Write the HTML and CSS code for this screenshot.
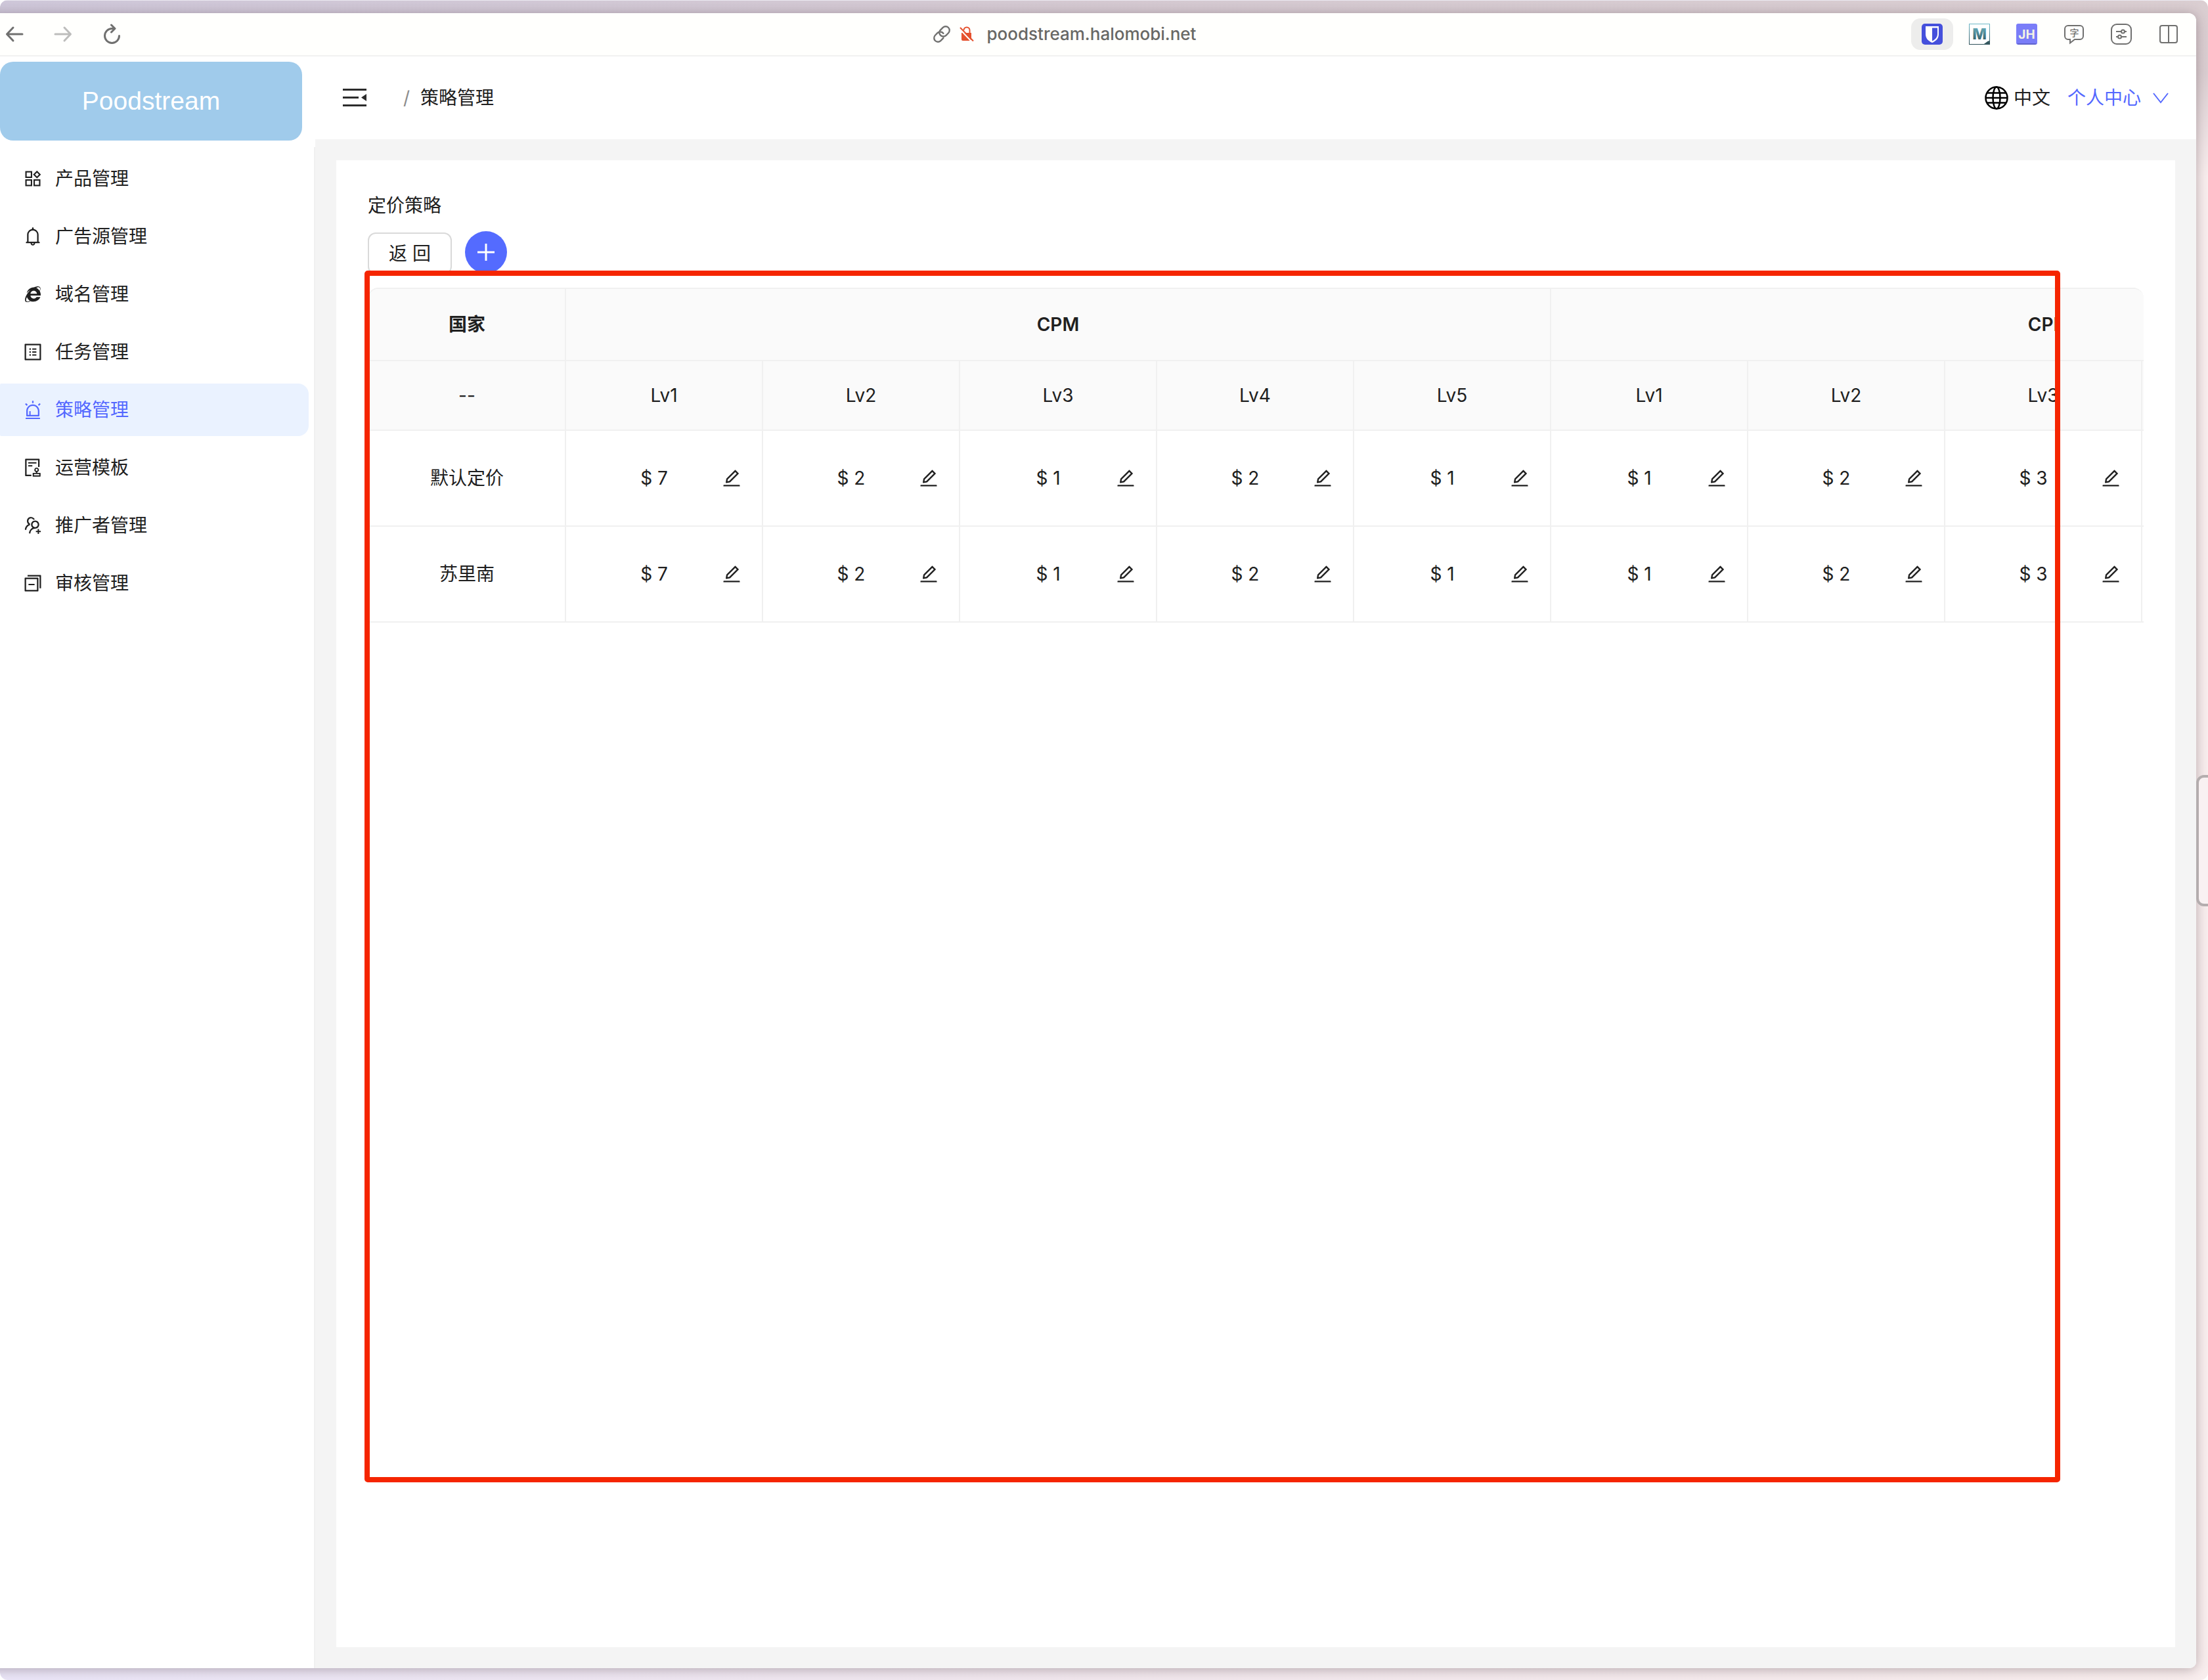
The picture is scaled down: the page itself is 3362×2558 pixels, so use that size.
FILE: index.html
```html
<!DOCTYPE html>
<html lang="zh-CN">
<head>
<meta charset="utf-8">
<meta name="viewport" content="width=device-width, initial-scale=1">
<title>策略管理</title>
<link rel="stylesheet" href="styles.css">
</head>
<body>
<div class="desktop">
  <span class="edge-handle"></span>
  <div class="window">
    <div class="toolbar">
      <div class="toolbar-nav">
        <button class="nav-btn" aria-label="Back"><svg viewBox="0 0 28 28"><path d="M26 14H3M12 4L2.500 14L12 24"/></svg></button>
        <button class="nav-btn nav-btn-off" aria-label="Forward"><svg viewBox="0 0 28 28"><path d="M2 14H25M16 4L25.500 14L16 24"/></svg></button>
        <button class="nav-btn" aria-label="Reload"><svg viewBox="0 0 28 32"><path d="M18 7.500H14.500A11 11 0 1 0 25.500 18.500M13.500 2L19 7.500L13.500 13"/></svg></button>
      </div>
      <div class="address">
        <svg class="link-icon" viewBox="1 1 22 22"><path d="M10 13a5 5 0 0 0 7.540.540l3-3a5 5 0 0 0-7.070-7.070l-3.500 3.500A5 5 0 0 0 10 13M14 11a5 5 0 0 0-7.540-.540l-3 3a5 5 0 0 0 7.070 7.070l3.500-3.500"/></svg>
        <svg class="lock-icon" viewBox="0 0 22 24"><path class="lock-body" d="M3 10H18V20A2 2 0 0 1 16 22H5A2 2 0 0 1 3 20Z"/><path class="lock-arc" d="M6.500 6A4.500 4.500 0 0 1 15.500 6V11"/><path class="lock-gap" d="M0 4L19 24"/><path class="lock-slash" d="M1 2L21 22.500"/></svg>
        <span>poodstream.halomobi.net</span>
      </div>
      <div class="toolbar-ext">
        <button class="ext-btn ext-btn-on" aria-label="Bitwarden"><svg viewBox="0 0 32 32"><rect width="32" height="32" rx="5" fill="#4550dc"/><path d="M6 4H26V16C26 23 21 27 16 29C11 27 6 23 6 16Z" fill="#fff"/><path d="M16 6.500H24V16C24 21 20 24.500 16 26.500Z" fill="#4550dc"/></svg></button>
        <button class="ext-btn" aria-label="M"><svg viewBox="0 0 32 32"><defs><linearGradient id="teal" x1="0" y1="0" x2="0" y2="1"><stop offset="0" stop-color="#6eb8c8"/><stop offset="1" stop-color="#2d5058"/></linearGradient></defs><rect x="0.500" y="0.500" width="31" height="31" fill="#fff" stroke="url(#teal)"/><path d="M20 32C25 31 27 26 32 26V32Z" fill="#35585f"/><text x="16" y="24" font-size="23" font-weight="800" text-anchor="middle" fill="url(#teal)">M</text></svg></button>
        <button class="ext-btn" aria-label="JH"><svg viewBox="0 0 32 32"><rect width="32" height="32" rx="3" fill="#7a7df8"/><path d="M1 30H31L29 32H3Z" fill="#6064cc"/><text x="16" y="23" font-size="19" font-weight="700" text-anchor="middle" fill="#f4f4e4">JH</text></svg></button>
        <button class="ext-btn" aria-label="Translate"><svg class="line-icon" viewBox="0 0 32 32"><path d="M7 3H25A5 5 0 0 1 30 8V19A5 5 0 0 1 25 24H17L10 29.500V24H7A5 5 0 0 1 2 19V8A5 5 0 0 1 7 3Z"/><text x="16.500" y="18.500" font-size="14" text-anchor="middle" class="glyph">字</text></svg></button>
        <button class="ext-btn" aria-label="Settings"><svg class="line-icon" viewBox="0 0 32 32"><rect x="1" y="1" width="30" height="30" rx="8"/><path d="M8 12H16M21 12H24M8 20H11M16 20H24"/><circle cx="18.500" cy="12" r="2.500"/><circle cx="13.500" cy="20" r="2.500"/></svg></button>
        <button class="ext-btn" aria-label="Split view"><svg class="line-icon" viewBox="0 0 32 32"><rect x="3" y="3" width="26" height="26" rx="3"/><path d="M16 3V29"/></svg></button>
      </div>
    </div>

    <div class="app">
      <aside class="sidebar">
        <button class="brand">Poodstream</button>
        <nav class="menu">
          <a class="menu-item" href="#"><svg viewBox="0 0 1024 1024"><g fill="none" stroke="currentColor" stroke-width="68"><rect x="178" y="178" width="268" height="268"/><rect x="178" y="578" width="268" height="268"/><rect x="578" y="578" width="268" height="268"/><path d="M713 167L857 311L713 455L569 311Z"/></g></svg>产品管理</a>
          <a class="menu-item" href="#"><svg viewBox="0 0 1024 1024"><path d="M816 768h-24V428c0-141.100-104.300-257.800-240-277.200V112c0-22.100-17.900-40-40-40s-40 17.900-40 40v38.800C336.300 170.200 232 286.900 232 428v340h-24c-17.700 0-32 14.300-32 32v32c0 4.400 3.600 8 8 8h216c0 61.800 50.200 112 112 112s112-50.200 112-112h216c4.400 0 8-3.600 8-8v-32c0-17.700-14.300-32-32-32zM512 888c-26.500 0-48-21.500-48-48h96c0 26.500-21.500 48-48 48zM304 768V428c0-55.600 21.600-107.800 60.900-147.100S456.400 220 512 220c55.600 0 107.800 21.600 147.100 60.900S720 372.400 720 428v340H304z"/></svg>广告源管理</a>
          <a class="menu-item" href="#"><svg viewBox="0 0 1024 1024"><path d="M852.600 367.600c16.300-36.900 32.100-90.700 32.100-131.800 0-109.100-119.500-147.600-314.500-57.900-161.400-10.800-316.800 110.500-355.600 279.700 46.300-52.300 117.400-123.400 183-151.700C316.100 378.300 246.700 470 194 565.600c-31.100 56.900-66 148.800-66 217.500 0 147.900 139.300 129.800 270.400 63 47.100 23.100 99.800 23.400 152.500 23.400 145.700 0 276.400-81.400 325.200-219H694.900c-78.800 132.900-295.200 79.500-295.200-71.200h493.200c9.600-65.400-2.500-143.600-40.300-211.700zM224.800 648.300c26.600 76.700 80.600 143.800 150.400 185-133.100 73.400-259.900 43.600-150.400-185zm174-163.300c3-82.700 75.400-142.300 156-142.300 80.100 0 153 59.600 156 142.300h-312zm276.800-281.400c32.100-15.400 72.800-33 108.800-33 47.100 0 81.400 32.600 81.400 80.600 0 30-11.100 73.500-21.900 101.800-39.300-63.500-98.900-122.400-168.300-149.400z"/></svg>域名管理</a>
          <a class="menu-item" href="#"><svg viewBox="0 0 1024 1024"><path d="M880 112H144c-17.700 0-32 14.300-32 32v736c0 17.700 14.300 32 32 32h736c17.700 0 32-14.300 32-32V144c0-17.700-14.300-32-32-32zm-40 728H184V184h656v656z"/><path d="M484 336h200v64H484zM484 480h200v64H484zM484 624h200v64H484z"/><circle cx="380" cy="368" r="40"/><circle cx="380" cy="512" r="40"/><circle cx="380" cy="656" r="40"/></svg>任务管理</a>
          <a class="menu-item menu-item-on" href="#" aria-current="page"><svg viewBox="0 0 1024 1024"><path d="M193 796c0 17.700 14.300 32 32 32h574c17.700 0 32-14.300 32-32V563c0-176.200-142.800-319-319-319S193 386.800 193 563v233zm72-233c0-136.400 110.600-247 247-247s247 110.600 247 247v193H404V585c0-5.500-4.500-10-10-10h-44c-5.500 0-10 4.500-10 10v171h-75V563zm-48.100-252.500l39.600-39.600c3.100-3.100 3.100-8.200 0-11.300l-67.900-67.900c-3.100-3.100-8.200-3.100-11.300 0l-39.600 39.600a8.030 8.030 0 0 0 0 11.300l67.900 67.900c3.100 3.100 8.100 3.100 11.300 0zm669.600-79.200l-39.600-39.600c-3.100-3.100-8.200-3.100-11.300 0l-67.900 67.900a8.030 8.030 0 0 0 0 11.300l39.600 39.600c3.100 3.100 8.200 3.100 11.300 0l67.900-67.900c3.100-3.200 3.100-8.200 0-11.300zM832 892H192c-17.700 0-32 14.300-32 32v24c0 4.400 3.600 8 8 8h688c4.400 0 8-3.600 8-8v-24c0-17.700-14.300-32-32-32zM484 180h56c4.400 0 8-3.600 8-8V76c0-4.400-3.600-8-8-8h-56c-4.400 0-8 3.600-8 8v96c0 4.400 3.600 8 8 8z"/></svg>策略管理</a>
          <a class="menu-item" href="#"><svg viewBox="0 0 1024 1024"><path d="M296 250c-4.400 0-8 3.600-8 8v48c0 4.400 3.600 8 8 8h384c4.400 0 8-3.600 8-8v-48c0-4.400-3.600-8-8-8H296zm184 144H296c-4.400 0-8 3.600-8 8v48c0 4.400 3.600 8 8 8h184c4.400 0 8-3.600 8-8v-48c0-4.400-3.600-8-8-8zm-48 458H208V148h560v320c0 4.400 3.600 8 8 8h56c4.400 0 8-3.600 8-8V108c0-17.700-14.300-32-32-32H168c-17.700 0-32 14.300-32 32v784c0 17.700 14.300 32 32 32h264c4.400 0 8-3.600 8-8v-56c0-4.400-3.600-8-8-8zm440-88H728v-36.600c46.300-13.800 80-56.600 80-107.400 0-61.900-50.100-112-112-112s-112 50.100-112 112c0 50.700 33.700 93.600 80 107.400V764H520c-8.800 0-16 7.200-16 16v152c0 8.800 7.200 16 16 16h352c8.800 0 16-7.200 16-16V780c0-8.800-7.200-16-16-16zM646 620c0-27.600 22.400-50 50-50s50 22.400 50 50-22.400 50-50 50-50-22.400-50-50zm180 266H566v-60h260v60z"/></svg>运营模板</a>
          <a class="menu-item" href="#"><svg viewBox="0 0 1024 1024"><path d="M892 772h-80v-80c0-4.400-3.600-8-8-8h-48c-4.400 0-8 3.600-8 8v80h-80c-4.400 0-8 3.600-8 8v48c0 4.400 3.600 8 8 8h80v80c0 4.400 3.600 8 8 8h48c4.400 0 8-3.600 8-8v-80h80c4.400 0 8-3.600 8-8v-48c0-4.400-3.600-8-8-8zM373.500 498.400c-.9-8.700-1.400-17.500-1.400-26.400 0-15.900 1.500-31.400 4.300-46.500.7-3.600-1.200-7.300-4.500-8.800-13.600-6.100-26.100-14.500-36.900-25.100a127.540 127.540 0 0 1-38.700-95.400c.9-32.100 13.800-62.600 36.300-85.600 24.700-25.300 57.900-39.100 93.200-38.700 31.900.3 62.700 12.600 86 34.400 7.900 7.400 14.700 15.600 20.400 24.400 2 3.100 5.900 4.400 9.300 3.200 17.600-6.100 36.200-10.400 55.300-12.400 5.600-.6 8.800-6.600 6.300-11.600-32.500-64.300-98.900-108.700-175.700-109.900-110.800-1.700-203.200 89.200-203.200 200 0 62.800 28.900 118.800 74.200 155.500-31.800 14.700-61.100 35-86.500 60.400-54.800 54.700-85.800 126.900-87.800 204a8 8 0 0 0 8 8.200h56.100c4.300 0 7.900-3.400 8-7.700 1.900-58 25.400-112.300 66.700-153.500 29.400-29.400 65.400-49.800 104.700-59.700 3.800-1.100 6.400-4.800 5.900-8.800zM824 472c0-109.400-87.900-198.300-196.900-200C516.300 270.300 424 361.200 424 472c0 62.800 29 118.800 74.200 155.500a300.950 300.950 0 0 0-86.400 60.400C357 742.600 326 814.800 324 891.800a8 8 0 0 0 8 8.200h56c4.300 0 7.900-3.400 8-7.700 1.900-58 25.400-112.300 66.700-153.500C505.800 695.700 563 672 624 672c110.400 0 200-89.500 200-200zm-109.500 90.500C690.300 586.700 658.200 600 624 600s-66.300-13.300-90.500-37.500a127.260 127.260 0 0 1-37.500-91.800c.3-32.800 13.400-64.500 36.300-88 24-24.600 56.100-38.300 90.400-38.700 33.900-.3 66.800 12.900 91 36.600 24.800 24.300 38.400 56.800 38.400 91.400-.1 34.200-13.400 66.300-37.600 90.500z"/></svg>推广者管理</a>
          <a class="menu-item" href="#"><svg viewBox="0 0 1024 1024"><path d="M752 240H144c-17.700 0-32 14.300-32 32v608c0 17.700 14.300 32 32 32h608c17.700 0 32-14.300 32-32V272c0-17.700-14.300-32-32-32zm-40 600H184V312h528v528zM880 112H264c-4.400 0-8 3.600-8 8v56c0 4.400 3.600 8 8 8h576v568c0 4.400 3.600 8 8 8h56c4.400 0 8-3.600 8-8V144c0-17.700-14.300-32-32-32zM300 544h296v64H300z"/></svg>审核管理</a>
        </nav>
      </aside>

      <div class="main">
        <header class="header">
          <button class="fold-btn" aria-label="Collapse menu"><svg viewBox="0 0 36 36"><path d="M0 4H36V7H0ZM0 16H24V19H0ZM0 28H36V31H0ZM36 12V23L28 17.500Z"/></svg></button>
          <div class="crumbs"><span class="crumb-sep">/</span><span>策略管理</span></div>
          <button class="lang-btn"><svg viewBox="0 0 36 36"><circle cx="18" cy="18" r="16.500"/><ellipse cx="18" cy="18" rx="5.500" ry="16.500"/><path d="M1.500 18H34.500M4 10.500H32M4 25.500H32"/></svg>中文</button>
          <a class="user-link" href="#">个人中心<svg viewBox="0 0 28 28"><path d="M3 7L14 21L25 7"/></svg></a>
        </header>

        <div class="content">
          <section class="card">
            <h1 class="card-title">定价策略</h1>
            <div class="actions">
              <button class="back-btn"><span>返</span><span>回</span></button>
              <button class="add-btn" aria-label="Add"><svg viewBox="0 0 32 32"><path d="M16 3V29M3 16H29"/></svg></button>
            </div>
            <div class="table-scroll">
              <table class="price-table">
                <thead>
                  <tr class="row-group"><th scope="col">国家</th><th scope="colgroup" colspan="5">CPM</th><th scope="colgroup" colspan="5">CPI</th></tr>
                  <tr class="row-level"><td>--</td><td>Lv1</td><td>Lv2</td><td>Lv3</td><td>Lv4</td><td>Lv5</td><td>Lv1</td><td>Lv2</td><td>Lv3</td><td></td><td></td></tr>
                </thead>
                <tbody>
                  <tr data-name="默认定价"></tr>
                  <tr data-name="苏里南"></tr>
                </tbody>
              </table>
            </div>
            <div class="highlight"></div>
          </section>
        </div>
      </div>
    </div>
  </div>
</div>
<script src="table.js"></script>
</body>
</html>
```
FILE: table.js
```javascript
// Fill each country row with its price per level and an edit button.
const prices = [7, 2, 1, 2, 1, 1, 2, 3];
const editIcon = '<svg viewBox="0 0 1024 1024"><path d="M257.700 752c2 0 4-.2 6-.5L431.900 722c2-.4 3.900-1.300 5.300-2.800l423.900-423.900a9.960 9.960 0 0 0 0-14.100L694.900 114.900c-1.900-1.900-4.400-2.900-7.100-2.900s-5.200 1-7.100 2.900L256.800 538.800c-1.500 1.500-2.400 3.300-2.800 5.300l-29.500 168.200a33.500 33.500 0 0 0 9.400 29.800c6.600 6.400 14.900 9.900 23.800 9.900zm67.400-174.400L687.800 215l73.300 73.300-362.700 362.600-88.900 15.700 15.600-89zM880 836H144c-17.700 0-32 14.300-32 32v36c0 4.400 3.600 8 8 8h784c4.400 0 8-3.600 8-8v-36c0-17.700-14.300-32-32-32z"/></svg>';
document.querySelectorAll('tr[data-name]').forEach(function (row) {
  const cells = prices.map(function (p) {
    return '<td><div class="price"><span>$ ' + p + '</span><button class="edit-btn" aria-label="Edit">' + editIcon + '</button></div></td>';
  });
  row.innerHTML = '<td>' + row.dataset.name + '</td>' + cells.join('') + '<td></td><td></td>';
});
```
FILE: styles.css
```css
* {
  box-sizing: border-box;
}

body {
  margin: 0;
  background: #fff;
  color: #202020;
  font: 28px/44px Inter, "Noto Sans CJK SC", sans-serif;
}

button {
  margin: 0;
  padding: 0;
  border: 0;
  background: none;
  color: inherit;
  font: inherit;
}

a {
  color: inherit;
  text-decoration: none;
}

svg {
  display: block;
  flex: none;
}

/* Desktop and browser window */
.desktop {
  position: relative;
  display: flex;
  min-height: 100vh;
  padding: 20px 18px 18px 0;
  border-radius: 12px;
  overflow: hidden;
  background:
    linear-gradient(#eae8f0, #eae8f0) 0 0 / 100% 1px no-repeat,
    linear-gradient(rgba(60, 40, 60, 0.16) 0, rgba(60, 40, 60, 0.16) 110px, transparent 270px),
    linear-gradient(90deg, #ebe6f8 0, #f2e8ee 50%, #f9eeee 100%);
}

.desktop::before {
  content: "";
  position: absolute;
  inset: 20px 18px 18px -20px;
  border-radius: 12px;
  box-shadow: 0 2px 18px rgba(60, 40, 50, 0.35);
}

.window {
  position: relative;
  display: flex;
  flex: 1;
  flex-direction: column;
  min-width: 0;
  overflow: hidden;
  border-radius: 0 12px 10px 0;
  background: #fff;
}

.edge-handle {
  position: absolute;
  top: 1180px;
  right: -20px;
  width: 38px;
  height: 200px;
  border: 4px solid #b4adae;
  border-radius: 12px;
  background: #f9f1f2;
  z-index: 1;
}

.toolbar {
  display: grid;
  grid-template-columns: 1fr auto 1fr;
  align-items: center;
  height: 66px;
  border-bottom: 2px solid #f1f1f1;
  background: #fffffd;
}

.toolbar-nav {
  display: flex;
  align-items: center;
  gap: 46px;
  padding-left: 8px;
}

.nav-btn svg {
  width: 28px;
  height: 32px;
  fill: none;
  stroke: #70706f;
  stroke-width: 3;
  stroke-linecap: round;
  stroke-linejoin: round;
}

.nav-btn-off svg {
  stroke: #bdbdbc;
}

.address {
  display: flex;
  align-items: center;
  margin-right: 102px;
  color: #686866;
  font-size: 26px;
  font-weight: 500;
}

.link-icon {
  width: 26px;
  height: 26px;
  margin-right: 14px;
  fill: none;
  stroke: #70706f;
  stroke-width: 2;
  stroke-linecap: round;
}

.lock-icon {
  width: 22px;
  height: 24px;
  margin-right: 20px;
  fill: none;
}

.lock-body {
  fill: #e5512e;
}

.lock-arc,
.lock-slash {
  stroke: #e5512e;
  stroke-width: 2;
}

.lock-gap {
  stroke: #fffffd;
  stroke-width: 2;
}

.toolbar-ext {
  display: flex;
  justify-content: flex-end;
  gap: 8px;
  padding-right: 10px;
}

.ext-btn {
  display: grid;
  place-items: center;
  width: 64px;
  height: 48px;
  border-radius: 14px;
}

.ext-btn-on {
  background: #ededec;
}

.ext-btn svg {
  width: 32px;
  height: 32px;
}

.line-icon {
  fill: none;
  stroke: #70706f;
  stroke-width: 2;
}

.glyph {
  fill: #70706f;
  stroke: none;
  font-weight: 500;
}

/* App shell */
.app {
  display: flex;
  flex: 1;
}

.sidebar {
  display: flex;
  flex: none;
  flex-direction: column;
  gap: 10px;
  width: 480px;
  padding-top: 8px;
}

.brand {
  height: 120px;
  margin-right: 20px;
  border-radius: 20px;
  background: #a0cbeb;
  color: #fff;
  font-family: "Liberation Sans", sans-serif;
  font-size: 39px;
}

.menu {
  display: flex;
  flex: 1;
  flex-direction: column;
  gap: 8px;
  padding: 8px 8px 0 0;
  border-right: 2px solid #f0f0f0;
}

.menu-item {
  display: flex;
  align-items: center;
  gap: 18px;
  height: 80px;
  padding-left: 34px;
  border-radius: 2px 16px 16px 2px;
}

.menu-item svg {
  width: 32px;
  height: 32px;
  fill: currentColor;
}

.menu-item-on {
  background: #eaf2ff;
  color: #5468ff;
}

.main {
  display: flex;
  flex: 1;
  flex-direction: column;
  min-width: 0;
  background: #f4f4f4;
}

.header {
  display: flex;
  align-items: center;
  height: 126px;
  padding: 0 40px 0 42px;
  background: #fff;
}

.fold-btn svg {
  width: 36px;
  height: 36px;
  fill: #2c2c2c;
}

.crumbs {
  display: flex;
  flex: 1;
  gap: 16px;
  padding-left: 56px;
}

.crumb-sep {
  color: #8c8c8c;
}

.lang-btn {
  display: flex;
  align-items: center;
  gap: 8px;
  margin-right: 26px;
}

.lang-btn svg {
  width: 36px;
  height: 36px;
  fill: none;
  stroke: #000;
  stroke-width: 2.5;
}

.user-link {
  display: flex;
  align-items: center;
  gap: 16px;
  color: #5468ff;
}

.user-link svg {
  width: 28px;
  height: 28px;
  fill: none;
  stroke: currentColor;
  stroke-width: 2;
}

.content {
  display: flex;
  flex: 1;
  padding: 32px;
}

/* Pricing card */
.card {
  position: relative;
  flex: 1;
  min-width: 0;
  padding: 48px;
  background: #fff;
}

.card-title {
  margin: 0 0 18px;
  font-size: 28px;
  font-weight: 400;
  line-height: 42px;
}

.actions {
  display: flex;
  align-items: flex-end;
  gap: 20px;
  height: 66px;
  margin-bottom: 20px;
}

.back-btn {
  display: flex;
  align-items: center;
  justify-content: center;
  gap: 8px;
  width: 128px;
  height: 64px;
  border: 2px solid #d9d9d9;
  border-radius: 12px;
}

.add-btn {
  display: grid;
  place-items: center;
  align-self: flex-start;
  width: 64px;
  height: 64px;
  border-radius: 50%;
  background: #546bff;
}

.add-btn svg {
  width: 32px;
  height: 32px;
  stroke: #fff;
  stroke-width: 3;
}

.table-scroll {
  overflow: hidden;
  border-top: 2px solid #f0f0f0;
  border-left: 2px solid #f0f0f0;
  border-radius: 16px 16px 0 0;
}

.price-table {
  width: 3300px;
  table-layout: fixed;
  border-collapse: separate;
  border-spacing: 0;
  text-align: center;
}

.price-table th,
.price-table td {
  height: 146px;
  padding: 0 32px;
  border-right: 2px solid #f0f0f0;
  border-bottom: 2px solid #f0f0f0;
}

.price-table tbody td + td {
  padding-right: 30px;
}

.price-table thead th,
.price-table thead td {
  background: #fafafa;
}

.price-table .row-group th {
  height: 110px;
  font-weight: 600;
}

.price-table .row-level td {
  height: 106px;
}

.price {
  display: flex;
  align-items: center;
}

.price span {
  flex: 1;
}

.edit-btn svg {
  width: 32px;
  height: 32px;
  fill: currentColor;
}

/* Red marker frame over the table area */
.highlight {
  position: absolute;
  inset: 168px 175px 251px 43px;
  border: 8px solid #f52500;
  border-radius: 5px;
  pointer-events: none;
}
```
